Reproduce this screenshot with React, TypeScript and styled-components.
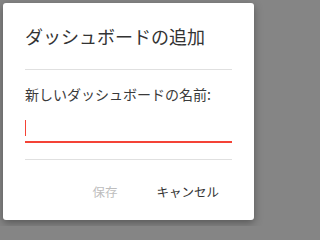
import React, { useState } from 'react'
import styled, { createGlobalStyle } from 'styled-components'

const GlobalStyle = createGlobalStyle`
  html, body {
    margin: 0;
    padding: 0;
    background: #858585;
    font-family: 'Noto Sans CJK JP', 'Noto Sans', sans-serif;
  }
  * {
    box-sizing: border-box;
  }
`

const Backdrop = styled.div`
  width: 258px;
  height: 226px;
  padding: 3px 4px 6px 3px;
`

const Dialog = styled.div`
  width: 251px;
  height: 217px;
  background: #ffffff;
  border-radius: 3px;
  box-shadow: 0 3px 8px rgba(0, 0, 0, 0.35);
  padding: 21px 22px 0 22px;
  display: flex;
  flex-direction: column;
`

const Title = styled.h2`
  margin: 0;
  font-size: 18px;
  line-height: 24px;
  font-weight: 400;
  color: #333333;
`

const Divider = styled.hr<{ $top: number }>`
  margin: ${(p) => p.$top}px 0 0 0;
  border: none;
  border-top: 1px solid #e0e0e0;
  height: 0;
`

const Label = styled.label`
  margin-top: 14px;
  font-size: 14px;
  line-height: 20px;
  color: #3a3a3a;
`

const InputWrap = styled.div`
  position: relative;
  margin-top: 13px;
`

const NameInput = styled.input`
  display: block;
  width: 100%;
  height: 26px;
  border: none;
  border-bottom: 2px solid #f44336;
  outline: none;
  padding: 0;
  font-size: 16px;
  font-family: inherit;
  caret-color: #f44336;
  background: transparent;
`

const Caret = styled.span`
  position: absolute;
  left: 0;
  top: 3px;
  width: 1px;
  height: 16px;
  background: #f44336;
`

const Actions = styled.div`
  display: flex;
  justify-content: flex-end;
  align-items: center;
  gap: 23px;
  margin-top: 19px;
  margin-right: 5px;
`

const ActionButton = styled.button<{ $disabled?: boolean }>`
  border: none;
  background: transparent;
  padding: 0 8px;
  height: 24px;
  font-family: inherit;
  font-size: 12.5px;
  color: ${(p) => (p.$disabled ? '#bdbdbd' : '#333333')};
  cursor: ${(p) => (p.$disabled ? 'default' : 'pointer')};
`

export default function App() {
  const [name, setName] = useState('')
  return (
    <>
      <GlobalStyle />
      <Backdrop>
        <Dialog>
          <Title>ダッシュボードの追加</Title>
          <Divider $top={21} />
          <Label>新しいダッシュボードの名前:</Label>
          <InputWrap>
            <NameInput value={name} onChange={(e) => setName(e.target.value)} />
            {name === '' && <Caret />}
          </InputWrap>
          <Divider $top={16} />
          <Actions>
            <ActionButton $disabled>保存</ActionButton>
            <ActionButton>キャンセル</ActionButton>
          </Actions>
        </Dialog>
      </Backdrop>
    </>
  )
}
